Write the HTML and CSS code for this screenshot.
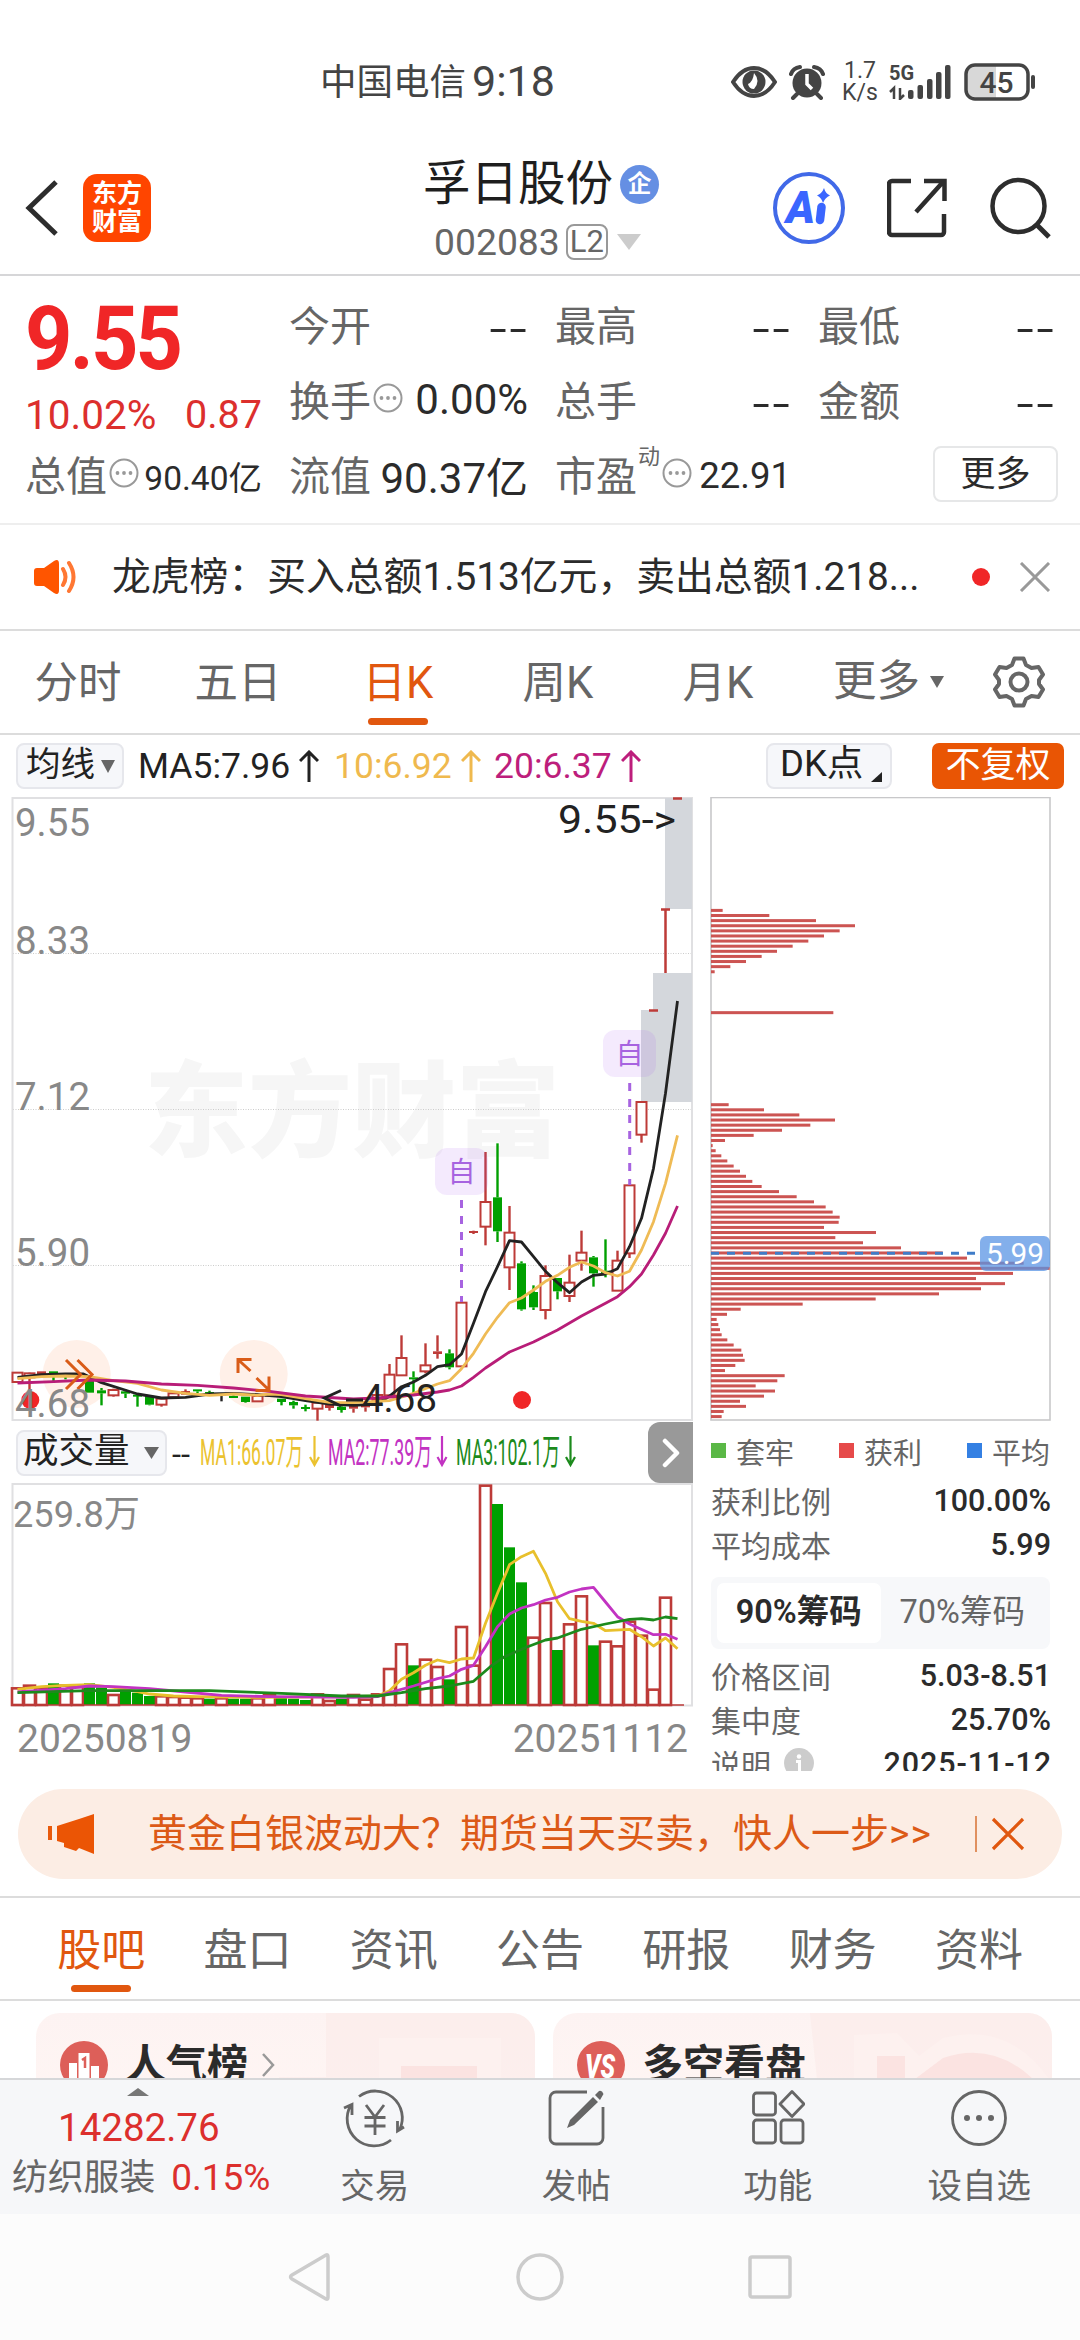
FILE: index.html
```html
<!DOCTYPE html>
<html lang="zh-CN">
<head>
<meta charset="utf-8">
<title>孚日股份 002083</title>
<link rel="stylesheet" href="styles.css">
</head>
<body>
<div class="app">
  <div class="status">
    <span class="carrier">中国电信</span><span class="clock">9:18</span>
    <svg class="st-eye" width="46" height="34" viewBox="0 0 46 34"><path d="M2 17Q11 3 23 3T44 17Q35 31 23 31T2 17Z" fill="none" stroke="#444" stroke-width="4"/><circle cx="23" cy="17" r="11.5" fill="#444"/><path d="M23 8q7 8 0 16q-5 0-6-5q5-2 6-11z" fill="#fff"/></svg>
    <svg class="st-alarm" width="36" height="36" viewBox="0 0 36 36"><circle cx="18" cy="19" r="14.5" fill="#444"/><path d="M2 10Q4 4 11 3M34 10Q32 4 25 3M8 30l-4 4M28 30l4 4" stroke="#444" stroke-width="4" fill="none" stroke-linecap="round"/><path d="M18 10v10l5 5" stroke="#fff" stroke-width="3.5" fill="none"/></svg>
    <span class="net"><span>1.7</span><span>K/s</span></span>
    <span class="sig"><b>5G</b><svg width="62" height="36" viewBox="0 0 62 36"><g fill="#444"><rect x="19" y="26" width="5.500" height="9" rx="2"/><rect x="28.500" y="21" width="5.500" height="14" rx="2"/><rect x="38" y="15" width="5.500" height="20" rx="2"/><rect x="47" y="8" width="5.500" height="27" rx="2"/><rect x="56" y="1" width="5.500" height="34" rx="2"/></g><path d="M1 28l4-4v11M15 31l-4 4V24" stroke="#444" stroke-width="2.500" fill="none"/></svg></span>
    <svg class="st-bat" width="72" height="38" viewBox="0 0 72 38"><rect x="2" y="2" width="62" height="34" rx="9" fill="#fff"/><path d="M32 2H11a9 9 0 0 0-9 9v16a9 9 0 0 0 9 9h21z" fill="#d8d8d8"/><rect x="2" y="2" width="62" height="34" rx="9" fill="none" stroke="#444" stroke-width="3.500"/><path d="M69 14v10" stroke="#444" stroke-width="4" stroke-linecap="round"/><text x="32.500" y="30" text-anchor="middle" class="bat-num">45</text></svg>
  </div>

  <header class="header">
    <svg class="back" width="36" height="60" viewBox="0 0 36 60"><path d="M32 4L5 30L32 56" fill="none" stroke="#2d2d2d" stroke-width="5"/></svg>
    <div class="logo"><span>东方</span><span>财富</span></div>
    <div class="stock">
      <div class="stock-name">孚日股份<i>企</i></div>
      <div class="stock-code">002083<em>L2</em><svg width="24" height="16" viewBox="0 0 24 16"><path d="M0 0H24L12 16Z" fill="#ccc"/></svg></div>
    </div>
    <svg class="ai" width="74" height="74" viewBox="0 0 74 74"><circle cx="37" cy="37" r="34" fill="#fff" stroke="#4169e8" stroke-width="4"/><text x="14" y="52" class="ai-a">A</text><path d="M49.500 36l-1.500 13" stroke="#3a66ff" stroke-width="8.500" stroke-linecap="round"/><path d="M52 17Q53.500 22.500 58 24.500Q53 26.500 51 32Q49.500 26.500 45 24.500Q50 22.500 52 17Z" fill="#3a66ff"/></svg>
    <svg class="share" width="60" height="60" viewBox="0 0 60 60"><path d="M24 3H5a3 3 0 0 0-3 3v48a3 3 0 0 0 3 3h49a3 3 0 0 0 3-3V36M29 34L56 4M37 3H57.500V23" fill="none" stroke="#2d2d2d" stroke-width="4.500"/></svg>
    <svg class="search" width="62" height="62" viewBox="0 0 62 62"><circle cx="28.500" cy="29" r="26" fill="none" stroke="#2d2d2d" stroke-width="4.500"/><path d="M46 47L59 60" stroke="#2d2d2d" stroke-width="5"/></svg>
  </header>

  <section class="quote">
    <div class="q-main">
      <div class="price">9.55</div>
      <div class="chg"><span>10.02%</span><span>0.87</span></div>
      <div class="cell sm"><label>总值</label><svg class="dots" viewBox="0 0 30 30"><use href="#dots"/></svg><b>90.40亿</b></div>
    </div>
    <div class="q-col">
      <div class="cell"><label>今开</label><b class="dash">--</b></div>
      <div class="cell"><label>换手</label><svg class="dots" viewBox="0 0 30 30"><use href="#dots"/></svg><b>0.00%</b></div>
      <div class="cell"><label>流值</label><b>90.37亿</b></div>
    </div>
    <div class="q-col">
      <div class="cell"><label>最高</label><b class="dash">--</b></div>
      <div class="cell"><label>总手</label><b class="dash">--</b></div>
      <div class="cell pe"><label>市盈</label><sup>动</sup><svg class="dots" viewBox="0 0 30 30"><use href="#dots"/></svg><b>22.91</b></div>
    </div>
    <div class="q-col">
      <div class="cell"><label>最低</label><b class="dash">--</b></div>
      <div class="cell"><label>金额</label><b class="dash">--</b></div>
      <div class="cell"><button class="more">更多</button></div>
    </div>
    <svg class="defs" width="0" height="0"><defs><g id="dots"><circle cx="15" cy="15" r="13.500" fill="none" stroke="#999" stroke-width="2"/><circle cx="8.500" cy="15" r="1.900" fill="#999"/><circle cx="15" cy="15" r="1.900" fill="#999"/><circle cx="21.500" cy="15" r="1.900" fill="#999"/></g></defs></svg>
  </section>

  <div class="news">
    <svg width="48" height="40" viewBox="0 0 48 40"><path d="M2 14q0-3 3-3h7L22 4q5-3 5 3v26q0 6-5 3L12 29H5q-3 0-3-3z" fill="#ff5500"/><path d="M31 12q5 8 0 16M37 6q9 14 0 28" fill="none" stroke="#ff7733" stroke-width="4" stroke-linecap="round"/></svg>
    <p>龙虎榜：买入总额1.513亿元，卖出总额1.218...</p>
    <i class="dot"></i>
    <svg width="32" height="30" viewBox="0 0 32 30"><path d="M2 1L30 29M30 1L2 29" stroke="#999" stroke-width="3"/></svg>
  </div>

  <nav class="periods">
    <a>分时</a><a>五日</a><a class="on">日K</a><a>周K</a><a>月K</a>
    <span class="p-more">更多<svg width="14" height="12" viewBox="0 0 14 12"><path d="M0 0H14L7 12Z" fill="#666"/></svg></span>
    <svg class="gear" width="54" height="54" viewBox="0 0 54 54"><path d="M22.500 3.500h9l2.500 6.500 5.500 3 7-1 4.500 7.500-4 5.500v4l4 5.500-4.500 7.500-7-1-5.500 3-2.500 6.500h-9l-2.500-6.500-5.500-3-7 1L3 34.500 7 29v-4l-4-5.500L7.500 12l7 1 5.500-3z" fill="none" stroke="#666" stroke-width="4" stroke-linejoin="round"/><circle cx="27" cy="27" r="8.500" fill="none" stroke="#666" stroke-width="4"/></svg>
  </nav>

  <div class="indicators">
    <span class="chip avg"><span>均线</span><svg width="14" height="13" viewBox="0 0 14 13"><path d="M0 0H14L7 13Z" fill="#666"/></svg></span>
    <span class="ma ma5">MA5:7.96<svg viewBox="0 0 20 32"><path d="M10 32V2M1 11L10 2L19 11"/></svg></span>
    <span class="ma ma10">10:6.92<svg viewBox="0 0 20 32"><path d="M10 32V2M1 11L10 2L19 11"/></svg></span>
    <span class="ma ma20">20:6.37<svg viewBox="0 0 20 32"><path d="M10 32V2M1 11L10 2L19 11"/></svg></span>
    <span class="chip dk"><span>DK点</span><svg width="11" height="10" viewBox="0 0 11 10"><path d="M11 0V10H0Z" fill="#222"/></svg></span>
    <span class="fq">不复权</span>
  </div>

  <section class="charts">
    <div class="left">
      <svg id="kline" width="700" height="625" viewBox="0 797 700 625"></svg>
      <div class="vol-head">
        <span class="chip vol"><span>成交量</span><svg width="15" height="12" viewBox="0 0 15 12"><path d="M0 0H15L7.500 12Z" fill="#666"/></svg></span>
        <svg width="481" height="61" viewBox="167 1422 481 61">
          <text x="172" y="1465" font-size="32" fill="#222" textLength="18" lengthAdjust="spacingAndGlyphs">--</text>
          <g font-size="36">
            <text x="200" y="1465" fill="#ebc22f" textLength="103" lengthAdjust="spacingAndGlyphs">MA1:66.07万</text>
            <text x="328" y="1465" fill="#c233c2" textLength="104" lengthAdjust="spacingAndGlyphs">MA2:77.39万</text>
            <text x="456" y="1465" fill="#1c8a1c" textLength="104" lengthAdjust="spacingAndGlyphs">MA3:102.1万</text>
          </g>
          <g fill="none" stroke-width="2.200"><path d="M314.500 1436V1465M310 1457L314.500 1465L319 1457" stroke="#ebc22f"/><path d="M442 1436V1465M437.500 1457L442 1465L446.500 1457" stroke="#c233c2"/><path d="M570.500 1436V1465M566 1457L570.500 1465L575 1457" stroke="#1c8a1c"/></g>
        </svg>
        <span class="expand"><svg width="18" height="30" viewBox="0 0 18 30"><path d="M3 3L15 15L3 27" fill="none" stroke="#fff" stroke-width="4.500" stroke-linecap="round" stroke-linejoin="round"/></svg></span>
      </div>
      <svg id="volume" width="700" height="226" viewBox="0 1483 700 226"></svg>
      <div class="dates"><span>20250819</span><span>20251112</span></div>
    </div>
    <div class="right">
      <svg id="chips" width="341" height="625" viewBox="710 797 341 625"></svg>
      <div class="legend"><span class="lg">套牢</span><span class="lr">获利</span><span class="lb">平均</span></div>
      <div class="row"><span>获利比例</span><b>100.00%</b></div>
      <div class="row"><span>平均成本</span><b>5.99</b></div>
      <div class="toggle"><span class="on">90%筹码</span><span>70%筹码</span></div>
      <div class="row"><span>价格区间</span><b>5.03-8.51</b></div>
      <div class="row"><span>集中度</span><b>25.70%</b></div>
      <div class="row"><span>说明<svg width="30" height="30" viewBox="0 0 30 30"><circle cx="15" cy="15" r="15" fill="#ccc"/><circle cx="15" cy="8.500" r="2.200" fill="#fff"/><path d="M12 13.500h3.500V23" fill="none" stroke="#fff" stroke-width="3"/></svg></span><b class="date">2025-11-12</b></div>
    </div>
  </section>

  <div class="promo">
    <svg width="48" height="40" viewBox="0 0 48 40"><path d="M2 12v14" stroke="#e85a0c" stroke-width="4"/><path d="M9 12L31 5L46 0V40L31 34L28 37L16 33V29L9 27Z" fill="#eb5505"/></svg>
    <p>黄金白银波动大？期货当天买卖，快人一步<span>&gt;&gt;</span></p>
    <i class="bar"></i>
    <svg width="34" height="34" viewBox="0 0 34 34"><path d="M2 2L32 32M32 2L2 32" stroke="#e0570f" stroke-width="3.200"/></svg>
  </div>

  <nav class="topics"><a class="on">股吧</a><a>盘口</a><a>资讯</a><a>公告</a><a>研报</a><a>财务</a><a>资料</a></nav>

  <div class="cards">
    <div class="card">
      <svg class="deco" width="499" height="66" viewBox="0 0 499 66"><path d="M290 0H500V66H243V64H290Z" fill="#fbe6e4" opacity=".4"/><path d="M343 25H465V66H343Z" fill="#fdf1ef"/><path d="M365 53H441V66H365Z" fill="#fbe3e1"/></svg>
      <div class="title">
        <svg width="48" height="48" viewBox="0 0 48 48"><circle cx="24" cy="24" r="24" fill="#dd5f59"/><path d="M9 22h8v20H9zM31 25h8v17h-8zM18.500 12h11v30h-11z" fill="#fff"/><path d="M22 19l3-2v10" fill="none" stroke="#dd5f59" stroke-width="2.500"/></svg>
        <b>人气榜</b>
        <svg width="14" height="26" viewBox="0 0 14 26"><path d="M2 2L12 13L2 24" fill="none" stroke="#999" stroke-width="2.500"/></svg>
      </div>
    </div>
    <div class="card">
      <svg class="deco" width="499" height="66" viewBox="0 0 499 66"><path d="M257 0H500V66H264Z" fill="#fbe6e4" opacity=".4"/><path d="M301 22L344 20L366 43L390 25Q455 8 496 66H301Z" fill="#fdf1ef"/><path d="M324 43H352V66H324ZM362 66L390 45Q440 28 480 66Z" fill="#fbe3e1"/></svg>
      <div class="title">
        <svg width="48" height="48" viewBox="0 0 48 48"><circle cx="24" cy="24" r="24" fill="#dd5f59"/><text x="23" y="37" text-anchor="middle" class="vs" textLength="30" lengthAdjust="spacingAndGlyphs">VS</text></svg>
        <b>多空看盘</b>
      </div>
    </div>
  </div>

  <footer class="bottom">
    <div class="index"><svg width="22" height="8" viewBox="0 0 22 8"><path d="M11 0L22 8H0Z" fill="#777"/></svg><strong>14282.76</strong><p>纺织服装<em>0.15%</em></p></div>
    <a><svg width="66" height="60" viewBox="0 0 66 60"><g fill="none" stroke="#666" stroke-width="2.800"><path d="M17 8.500A27 27 0 0 1 57.500 42M62 39L55.500 43V33M49 52A27 27 0 0 1 9 17M2 20L10 16.500V27"/><path d="M24 17L33 29L42 17M22.500 29.500H43.500M22.500 38H43.500M33 29V47"/></g></svg>交易</a>
    <a><svg width="58" height="60" viewBox="0 0 58 60"><path d="M40 4H9a6 6 0 0 0-6 6v40a6 6 0 0 0 6 6h41a6 6 0 0 0 6-6V19" fill="none" stroke="#666" stroke-width="2.800"/><path d="M46 9L51 14L27 37L20 40L23 32ZM48 7L52 3Q55 2 56.500 6L53 12Z" fill="#666"/></svg>发帖</a>
    <a><svg width="54" height="60" viewBox="0 0 54 60"><g fill="none" stroke="#666" stroke-width="2.800"><rect x="2.500" y="5" width="22" height="22" rx="3"/><rect x="2.500" y="32" width="22" height="23" rx="3"/><rect x="30" y="32" width="22" height="23" rx="3"/><path d="M41 3.500L53 16L41 28.500L29 16Z" stroke-linejoin="round"/></g></svg>功能</a>
    <a><svg width="58" height="60" viewBox="0 0 58 60"><circle cx="29" cy="30" r="26.500" fill="none" stroke="#666" stroke-width="2.800"/><g fill="#666"><circle cx="17" cy="30" r="3"/><circle cx="29" cy="30" r="3"/><circle cx="41" cy="30" r="3"/></g></svg>设自选</a>
  </footer>

  <div class="sysnav">
    <svg width="44" height="50" viewBox="0 0 44 50"><path d="M39 3Q41 2 41 5V45Q41 48 39 47L5 27Q2 25 5 23Z" fill="none" stroke="#ccc" stroke-width="3.500"/></svg>
    <svg width="50" height="50" viewBox="0 0 50 50"><circle cx="25" cy="25" r="22" fill="none" stroke="#ccc" stroke-width="3.500"/></svg>
    <svg width="44" height="46" viewBox="0 0 44 46"><rect x="2" y="3" width="40" height="40" rx="2" fill="none" stroke="#ccc" stroke-width="3.500"/></svg>
  </div>
</div>
<script src="chart.js"></script>
</body>
</html>
```

FILE: styles.css
```css
* { box-sizing: border-box; margin: 0; padding: 0; }
body, button { font-family: Roboto, "Noto Sans CJK SC", sans-serif; }
body { background: #fff; color: #2b2b2b; }
i, em { font-style: normal; }
svg { display: block; flex: none; }
.app { width: 1080px; height: 2340px; overflow: hidden; display: flex; flex-direction: column; background: #fff; }
.app > * { flex: none; }

.status { height: 155px; padding: 8px 0 0 320px; display: flex; align-items: center; color: #444; white-space: nowrap; }
.carrier { font-size: 36.500px; width: 152px; padding-bottom: 4px; }
.clock { font-size: 43px; width: 259px; padding-bottom: 1px; }
.st-alarm { margin-left: 12px; }
.net { width: 60px; margin-left: 5px; display: flex; flex-direction: column; align-items: center; font-size: 23px; line-height: 22px; }
.sig { width: 62px; height: 36px; display: grid; margin-left: -1px; }
.sig > * { grid-area: 1 / 1; }
.sig b { font-size: 20px; line-height: 18px; font-weight: 700; }
.st-bat { margin-left: 13px; }
.bat-num { font-size: 30px; font-weight: 500; fill: #444; }

.header { height: 121px; display: flex; padding: 0 0 0 24px; border-bottom: 2px solid #d6d6d8; }
.back { margin-top: 23px; }
.logo { width: 68px; height: 68px; margin: 19px 0 0 23px; background: #ff4500; border-radius: 14px; color: #fff; font-size: 25px; font-weight: 700; line-height: 28px; padding-top: 6px; text-align: center; }
.logo span { display: block; }
.stock { margin-left: 272px; width: 241px; }
.stock-name { height: 58px; line-height: 58px; font-size: 47.500px; color: #1e1e1e; display: flex; align-items: center; }
.stock-name i { width: 39px; height: 39px; border-radius: 50%; background: #658fe3; color: #fff; font-size: 24px; font-weight: 700; line-height: 38px; text-align: center; margin-left: 7px; }
.stock-code { display: flex; align-items: center; height: 58px; margin-left: 11px; font-size: 37.300px; color: #666; }
.stock-code em { width: 42px; height: 36px; border: 2px solid #999; border-radius: 8px; font-size: 31px; line-height: 32px; text-align: center; margin: 0 9px 0 6px; }
.ai { margin: 16px 0 0 108px; }
.ai-a { font-size: 44px; font-weight: 900; font-style: italic; fill: #3a66ff; }
.share { margin: 23px 0 0 41px; }
.search { margin: 22px 0 0 43px; }

.quote { height: 249px; padding: 12px 26px 0 25px; display: grid; grid-template-columns: 237px 239px 236px 237px; column-gap: 27px; border-bottom: 2px solid #eee; }
.defs { position: absolute; }
.price { font-size: 89px; font-weight: 700; line-height: 101px; height: 98px; letter-spacing: -3px; color: #f02627; transform: scaleX(.93); transform-origin: 0 0; }
.chg { height: 57px; display: flex; justify-content: space-between; line-height: 58px; font-size: 40.500px; color: #dc2f2d; white-space: nowrap; }
.chg span + span { font-size: 39.500px; }
.cell { height: 75px; display: flex; align-items: center; white-space: nowrap; }
.q-main .cell { margin-top: -5px; }
.cell label { font-size: 41px; color: #666; padding-bottom: 5px; }
.cell b { font-weight: 400; font-size: 42px; margin-left: auto; padding-bottom: 3px; }
.cell .dash { font-family: "Noto Sans CJK SC", sans-serif; font-weight: 300; font-size: 60px; line-height: 60px; padding-bottom: 10px; }
.cell.sm b { font-size: 33.500px; padding-bottom: 1px; }
.dots { width: 30px; height: 30px; margin: -6px 0 0 2px; }
.cell.pe sup { font-size: 22px; color: #666; line-height: 24px; margin: -38px 0 0 1px; }
.cell.pe b { font-size: 36.500px; padding-bottom: 0; }
.more { width: 125px; height: 56px; margin: -4px -3px 0 auto; border: 2px solid #e6e7e8; border-radius: 8px; background: #fff; font-size: 35px; line-height: 50px; padding-top: 2px; color: #2b2b2b; }

.news { height: 106px; display: flex; align-items: center; padding: 0 29px 0 32px; border-bottom: 2px solid #dcdcdc; white-space: nowrap; }
.news p { font-size: 38.800px; margin-left: 32px; width: 860px; line-height: 60px; }
.dot { width: 18px; height: 18px; border-radius: 50%; background: #f02627; margin-right: auto; }

.periods { height: 104px; display: flex; align-items: center; border-bottom: 2px solid #dcdcdc; font-size: 43.500px; color: #666; white-space: nowrap; }
.periods a { width: 160px; height: 102px; line-height: 105px; text-align: center; position: relative; }
.periods a:first-child { margin-left: -2px; }
.periods .on, .topics .on { color: #e1570f; }
.periods .on::after, .topics .on::after { content: ""; position: absolute; left: 50%; bottom: 8px; width: 60px; height: 7px; margin-left: -30px; border-radius: 4px; background: #e1570f; }
.p-more { display: flex; align-items: center; gap: 10px; margin-left: 35px; height: 102px; line-height: 100px; }
.gear { margin-left: 48px; }

.indicators { height: 62px; display: flex; align-items: center; padding-left: 16px; font-size: 35.500px; color: #222; white-space: nowrap; }
.chip { display: flex; align-items: center; height: 46px; background: #f6f7fa; border: 2px solid #e6e7ec; border-radius: 8px; }
.chip span { line-height: 40px; padding-bottom: 4px; }
.avg { width: 108px; padding-left: 8px; gap: 6px; font-size: 34.500px; }
.ma { display: flex; align-items: center; }
.ma svg { width: 20px; height: 32px; margin-left: 9px; fill: none; stroke: currentColor; stroke-width: 3; }
.ma5 { margin-left: 14px; width: 196px; }
.ma10 { color: #efb94e; width: 160px; }
.ma20 { color: #bd1e7c; width: 272px; }
.dk { width: 126px; padding-left: 12px; font-size: 36.500px; }
.dk svg { margin: 22px 0 0 8px; }
.fq { width: 132px; height: 46px; margin-left: 40px; border-radius: 7px; background: #e95504; color: #fff; font-size: 35px; line-height: 45px; text-align: center; }

.charts { height: 974px; display: flex; overflow: hidden; }
.left { width: 700px; }
.vol-head { height: 61px; display: flex; align-items: center; padding-left: 16px; }
.vol { width: 151px; padding-left: 5px; gap: 14px; font-size: 35.500px; color: #222; white-space: nowrap; }
.expand { width: 45px; height: 61px; background: #999; border-radius: 12px 0 0 12px; display: flex; align-items: center; justify-content: center; }
.dates { display: flex; justify-content: space-between; padding: 0 12px 0 17px; font-size: 39px; line-height: 61px; color: #888; }
.right { width: 341px; margin-left: 10px; font-size: 30px; color: #666; white-space: nowrap; }
.axis { font-size: 39px; fill: #888; }
.mark { font-size: 39px; fill: #222; }
.watermark { font-size: 104px; font-weight: 900; fill: #f6f6f6; }
.fav { font-size: 28px; fill: #a763e0; }
.avgnum { font-size: 30px; fill: #fff; }
.legend { display: flex; justify-content: space-between; height: 59px; align-items: center; padding: 0 1px 2px; font-size: 29px; }
.legend span { display: flex; align-items: center; }
.legend span::before { content: ""; width: 15px; height: 15px; margin-right: 10px; background: #5ab846; }
.legend .lr::before { background: #e64a4a; }
.legend .lb::before { background: #3480e3; }
.row { display: flex; justify-content: space-between; align-items: center; height: 44px; padding: 0 0 6px 1px; }
.row b { font-weight: 500; font-size: 30.500px; color: #2b2b2b; }
.row .date { letter-spacing: .9px; margin-right: -1px; }
.row span { display: flex; align-items: center; gap: 13px; }
.toggle { display: flex; height: 72px; margin: 8px 1px 7px; padding: 6px; background: #f7f8fa; border-radius: 8px; font-size: 32.500px; line-height: 59px; text-align: center; }
.toggle span { flex: 1; }
.toggle .on { background: #fff; border-radius: 7px; color: #2b2b2b; font-weight: 600; }

.promo { width: 1044px; height: 90px; margin: 18px 18px 17px; border-radius: 45px; background: #fcede4; color: #dc5a17; display: flex; align-items: center; padding: 0 37px 0 30px; white-space: nowrap; }
.promo p { font-size: 39px; line-height: 60px; margin: -1px 0 0 52px; width: 827px; }
.promo span { letter-spacing: 1px; }
.bar { width: 2px; height: 36px; background: #e0905f; margin-right: auto; }

.topics { height: 105px; display: flex; padding-left: 28px; border-top: 2px solid #dcdcdc; border-bottom: 2px solid #dcdcdc; font-size: 44px; line-height: 106px; color: #666; }
.topics a { width: 146.300px; text-align: center; position: relative; }
.topics .on::after { bottom: 7px; }

.cards { height: 77px; overflow: hidden; display: flex; gap: 18px; padding: 12px 28px 0 36px; }
.card { width: 499px; height: 120px; border-radius: 24px; overflow: hidden; background: linear-gradient(#fdf3f2, #fff6f4); display: grid; align-items: start; }
.card > * { grid-area: 1 / 1; }
.title { display: flex; align-items: center; height: 60px; margin: 22px 0 0 24px; white-space: nowrap; }
.title b { margin: 0 13px 0 17px; font-size: 41px; line-height: 60px; color: #2b2b2b; }
.vs { font-size: 34px; font-weight: 900; font-style: italic; fill: #fff; }

.bottom { height: 136px; background: #f6f7f9; border-top: 2px solid #d6d7d9; display: flex; color: #666; font-size: 34.500px; white-space: nowrap; }
.index { width: 274px; display: flex; flex-direction: column; }
.index svg { margin: 8px 0 0 127px; }
.index strong { font-weight: 400; font-size: 38.500px; line-height: 50px; margin: 7px 0 0 58px; color: #dc2f2d; }
.index p { font-size: 35.800px; line-height: 50px; margin-left: 12px; }
.index em { color: #dc2f2d; margin-left: 16px; font-size: 37px; }
.bottom a { width: 201.500px; display: flex; flex-direction: column; align-items: center; line-height: 50px; padding-top: 8px; }
.bottom a svg { margin-bottom: 13px; }
.sysnav { height: 126px; background: #fcfcfc; display: flex; justify-content: space-between; align-items: center; padding: 0 288px 0 287px; }
```

FILE: chart.js
```js
const NS = 'http://www.w3.org/2000/svg';
const RED = '#bd3b38', GREEN = '#00a000';

function add(svg, tag, attrs, text) {
  const el = document.createElementNS(NS, tag);
  for (const k in attrs) el.setAttribute(k, attrs[k]);
  if (text) el.textContent = text;
  svg.appendChild(el);
}
const cx = i => 17.5 + 12 * i;
function line(svg, pts, color, width) {
  add(svg, 'polyline', { points: pts, fill: 'none', stroke: color, 'stroke-width': width, 'stroke-linejoin': 'round' });
}
// Turns [column, offset] pairs into plotted points; offsets are thirds of a pixel below base.
const toPts = (arr, base) => arr.map(([i, z]) => cx(i) + ',' + (base + z / 3).toFixed(1)).join(' ');

// ---- Daily candles: [type, high, bodyTop, bodyBottom, low]
const candles = [
  ['r',818,818,846,846],['r',818,820,832,875],['r',814,814,824,824],['g',814,814,824,848],['g',822,822,828,838],
  ['r',822,822,830,830],['g',842,842,878,878],['g',864,871,880,916],['r',866,870,886,890],['g',868,874,881,894],
  ['g',882,884,888,920],['g',888,888,914,916],['r',896,896,914,920],['r',880,880,892,892],['r',868,873,884,884],
  ['g',868,868,874,880],['g',872,876,880,880],['k',880,880,884,904],['g',886,888,892,892],['g',890,890,906,908],
  ['r',888,888,904,904],['r',884,884,890,890],['g',896,896,906,916],['g',902,906,916,926],['g',914,921,925,934],
  ['r',908,908,926,962],['r',914,914,924,932],['g',918,920,930,938],['r',914,916,926,938],['r',914,914,922,935],
  ['r',885,885,900,900],['r',792,824,886,886],['r',706,774,826,826],['g',814,832,838,880],['r',730,796,814,820],
  ['r',706,754,762,776],['g',748,760,802,808],['r',608,608,799,799],['r',392,393,397,402],['r',156,306,380,436],
  ['g',130,292,394,426],['r',318,398,502,570],['g',484,490,628,632],['g',556,576,622,630],['r',496,528,630,658],
  ['g',534,534,574,598],['r',464,548,588,606],['r',392,458,482,512],['g',468,472,520,560],['g',418,512,520,532],
  ['r',452,482,572,572],['r',256,256,460,474],['r',6,6,104,128]
];
const k = document.getElementById('kline');
add(k, 'text', { x: 144, y: 1149, class: 'watermark', textLength: 416, lengthAdjust: 'spacingAndGlyphs' }, '东方财富');
[953.5, 1109.5, 1265.5].forEach(y => add(k, 'line', { x1: 13, x2: 692, y1: y, y2: y, stroke: '#ccc', 'stroke-width': 1, 'stroke-dasharray': '1 1.5' }));
add(k, 'rect', { x: 12.5, y: 798, width: 679.5, height: 622, fill: 'none', stroke: '#e0e0e2', 'stroke-width': 2 });
add(k, 'path', { d: 'M665 798H692V909H665ZM653 973H692V1102H641V1010H653Z', fill: '#d4d7dc' });
[76.7, 253.7].forEach(x => add(k, 'circle', { cx: x, cy: 1374, r: 34, fill: '#fff0e8' }));
candles.forEach(([t, h, a, b, l], i) => {
  const x = cx(i), c = t === 'r' ? RED : t === 'g' ? GREEN : '#222', Y = z => 1100 + z / 3;
  if (a > h) add(k, 'line', { x1: x, x2: x, y1: Y(h), y2: Y(a), stroke: c, 'stroke-width': 2.4 });
  if (l > b) add(k, 'line', { x1: x, x2: x, y1: Y(b), y2: Y(l), stroke: c, 'stroke-width': 2.4 });
  const hollow = t === 'r' && b - a > 11;
  if (hollow) add(k, 'rect', { x: x - 5, y: Y(a) , width: 10, height: Y(b) - Y(a), fill: '#fff', stroke: c, 'stroke-width': 2 });
  else add(k, 'rect', { x: x - 4.5, y: Y(a), width: 9, height: Math.max(2, Y(b) - Y(a)), fill: c });
});
add(k, 'path', { d: 'M649 1010.5H658M661 909.5H670M665.500 909V973M673 798.5H682', stroke: RED, 'stroke-width': 2.5, fill: 'none' });

const ma20 = [[0,849],[3,845],[6,840],[9,843],[12,852],[15,856],[18,864],[21,874],[24,888],[28,897],[30,894],[33,885],[35,876],[36,870],[37,858],[38,832],[39,804],[40,780],[41,756],[43,726],[45,690],[47,648],[49,610],[50,590],[51,560],[52,522],[53,465],[54,400],[55,318]];
const ma10 = [[0,836],[2,830],[4,828],[6,830],[8,842],[10,850],[12,870],[14,880],[16,886],[18,882],[20,886],[21,882],[22,884],[24,896],[26,907],[28,908],[31,902],[33,880],[35,852],[36,842],[37,806],[38,760],[39,702],[40,652],[41,608],[42,594],[43,570],[44,544],[45,526],[46,502],[47,486],[48,498],[49,518],[50,528],[51,514],[52,450],[53,365],[54,250],[55,106]];
const ma5 = [[0,832],[2,824],[4,822],[5.5,822],[7,848],[10,882],[12,894],[14,892],[16,882],[18,880],[20,884],[22,890],[24,902],[26,912],[28,916],[30,912],[31,888],[32,860],[33,846],[34,826],[35,800],[36,794],[37,762],[38,670],[39,575],[40,500],[41,422],[42,426],[43,470],[44,514],[45,548],[46,578],[47,546],[48,526],[49,522],[50,506],[51,440],[52,355],[53,205],[54,-20],[55,-297]];
line(k, toPts(ma5, 1100), '#222', 2.8);
line(k, toPts(ma10, 1100), '#efbb55', 2.8);
line(k, toPts(ma20, 1100), '#b81d78', 2.8);

// Watchlist markers
[[435, 1148, 461.5, 1200, 1302], [603, 1030, 629.7, 1083, 1185]].forEach(([x, y, lx, y1, y2]) => {
  add(k, 'rect', { x, y, width: 53, height: 47, rx: 12, fill: '#a860f0', 'fill-opacity': .13 });
  add(k, 'text', { x: x + 26.5, y: y + 34, class: 'fav', 'text-anchor': 'middle' }, '自');
  add(k, 'line', { x1: lx, x2: lx, y1, y2, stroke: '#a763e0', 'stroke-width': 3, 'stroke-dasharray': '8 8' });
});
add(k, 'path', { d: 'M66 1360L80.500 1374.500L66 1389M77.500 1360L92 1374.500L77.500 1389M238 1373V1359.500H251.500M238 1359.500L250.500 1371M256.500 1378L268.500 1389.500M269 1376.500V1390.500H255.500', fill: 'none', stroke: '#d95c18', 'stroke-width': 3 });
[30.3, 522].forEach(x => add(k, 'circle', { cx: x, cy: 1400, r: 9, fill: '#f02627' }));
[[835.5, '9.55'], [953.5, '8.33'], [1109.5, '7.12'], [1265.5, '5.90'], [1417, '4.68']].forEach(([y, t]) =>
  add(k, 'text', { x: 15, y, class: 'axis', textLength: 75, lengthAdjust: 'spacingAndGlyphs' }, t));
add(k, 'text', { x: 558, y: 833, class: 'mark', textLength: 118, lengthAdjust: 'spacingAndGlyphs' }, '9.55->');
add(k, 'text', { x: 362, y: 1412, class: 'mark', textLength: 75, lengthAdjust: 'spacingAndGlyphs' }, '4.68');
add(k, 'path', { d: 'M341 1390.500L324.500 1398L341 1406M346 1400H363', fill: 'none', stroke: '#222', 'stroke-width': 3 });

// ---- Volume
const vol = 'r832 r824 r830 g820 r824 r828 g820 g832 r852 g844 g848 g858 r856 r858 r860 r862 g866 r862 g866 g866 r862 r852 g864 g866 g870 r850 r870 g866 r852 r866 r850 r774 r700 g766 r746 r768 g808 r648 r764 r224 g282 g412 g517 r680 r576 g720 r640 r556 g706 r692 r706 r632 r674 r836 r560'.split(' ');
const v = document.getElementById('volume');
add(v, 'rect', { x: 12.5, y: 1484, width: 679.5, height: 221.5, fill: 'none', stroke: '#e0e0e2', 'stroke-width': 2 });
vol.forEach((s, i) => {
  const y = 1410 + s.slice(1) / 3, x = cx(i);
  if (s[0] === 'r') add(v, 'rect', { x: x - 5.5, y: y + 1, width: 11, height: 1704 - y, fill: '#fff', stroke: RED, 'stroke-width': 2.6 });
  else add(v, 'rect', { x: x - 5.5, y, width: 11, height: 1705 - y, fill: GREEN });
});
add(v, 'line', { x1: 12, x2: 684, y1: 1705, y2: 1705, stroke: RED, 'stroke-width': 1.5 });
line(v, toPts([[0,838],[2,830],[4,826],[6,824],[8,832],[10,845],[11,852],[13,858],[15,860],[20,862],[28,860],[30,858],[31,842],[32,808],[33,788],[34,766],[35,750],[36,758],[37,747],[38,744],[39,640],[40,550],[41,464],[42,440],[43,424],[44,490],[45,575],[46,626],[47,634],[48,640],[49,662],[51,658],[52,680],[53,708],[54,684],[55,716]], 1410), '#e8c02c', 2.8);
line(v, toPts([[0,846],[4,836],[6,828],[8,830],[11,836],[14,846],[17,856],[21,860],[28,862],[30,860],[31,848],[33,828],[35,806],[36,798],[37,778],[38,766],[39,710],[40,650],[41,612],[42,594],[43,584],[44,570],[45,562],[46,546],[47,537],[48,532],[49,576],[50,620],[51,642],[53,674],[54,673],[55,688]], 1410), '#c233c2', 2.8);
line(v, toPts([[0,848],[6,842],[16,842],[22,850],[27,858],[30,858],[32,848],[34,836],[36,828],[38,814],[39.4,770],[40.500,742],[42.400,712],[44,690],[45,684],[47,658],[49,642],[51,628],[52,626],[53,630],[54,621],[55,626]], 1410), '#1c8a1c', 2.8);
add(v, 'text', { x: 13, y: 1527, fill: '#888', 'font-size': 37, textLength: 127, lengthAdjust: 'spacingAndGlyphs' }, '259.8万');

// ---- Cost distribution: bar ends per price level, in thirds of a pixel
const c = document.getElementById('chips');
add(c, 'rect', { x: 711, y: 797.5, width: 339, height: 622.5, fill: 'none', stroke: '#c8c8ca', 'stroke-width': 1.6 });
const levels = {
  0: [98,238,378,495,449,402,355,308,261,215,168,121,74],
  20: [430],
  38: [116,222,328,435,361,276,191,105,68,77,94,112,131,150,168,187,215,267,320,372,407,428,449,446,402,558,436,519,633,758,831,1001,1079,969,858,945,873,747,557,338,152,111,80,85,90,95,112,131,154,159,164,136,105,284,262,197,255,222,150,168,101,95]
};
for (const s in levels) levels[s].forEach((e, n) =>
  add(c, 'rect', { x: 711, y: 908.9 + (+s + n) * 5.113, width: (e - 63) / 3, height: 3, fill: '#cc5452' }));
add(c, 'line', { x1: 711, x2: 975, y1: 1253.3, y2: 1253.3, stroke: '#3f7cc8', 'stroke-width': 3, 'stroke-dasharray': '8 8' });
add(c, 'rect', { x: 980, y: 1236, width: 70, height: 35, rx: 6, fill: '#5a94e4', 'fill-opacity': .75 });
add(c, 'text', { x: 986, y: 1264, class: 'avgnum', textLength: 58, lengthAdjust: 'spacingAndGlyphs' }, '5.99');
```
